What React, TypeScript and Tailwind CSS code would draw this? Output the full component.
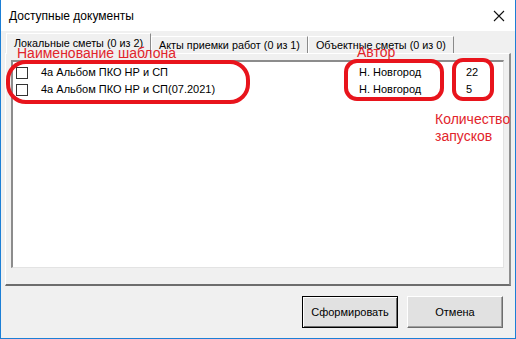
import React from 'react';

const rows = [
  { name: '4а Альбом ПКО НР и СП', author: 'Н. Новгород', runs: 22 },
  { name: '4а Альбом ПКО НР и СП(07.2021)', author: 'Н. Новгород', runs: 5 },
];

const tabs = ['Локальные сметы (0 из 2)', 'Акты приемки работ (0 из 1)', 'Объектные сметы (0 из 0)'];

const App: React.FC = () => {
  return (
    <div className="w-[516px] h-[339px] bg-[#f0f0f0] border border-[#1c7fd6] border-t-0 flex flex-col relative overflow-hidden text-black" style={{ fontFamily: '"Liberation Sans", "DejaVu Sans", sans-serif' }}>
      {/* Title bar */}
      <div className="h-[31px] bg-white flex items-center justify-between pl-[8px] pr-[10px] shrink-0">
        <span className="text-[12px]">Доступные документы</span>
        <svg width="12" height="12" viewBox="0 0 12 12">
          <path d="M1 1 L11 11 M11 1 L1 11" stroke="#111" strokeWidth="1.1" fill="none" />
        </svg>
      </div>

      {/* Tabs */}
      <div className="flex items-end pl-[5px] h-[21px] mt-[1px] shrink-0">
        {tabs.map((t, i) => (
          <div
            key={t}
            className={`border-t border-l border-r border-t-white border-l-white border-r-[#8a8a8a] px-[7px] text-[10.8px] whitespace-nowrap flex items-center ${
              i === 0 ? 'h-[21px] pb-[2px] bg-[#f0f0f0] relative z-10 mb-[-1px]' : 'h-[17px]'
            }`}
          >
            {t}
          </div>
        ))}
      </div>

      {/* Tab panel */}
      <div className="mx-[4px] h-[233px] border-t border-l border-t-white border-l-white border-r-2 border-b-2 border-r-[#8f8f8f] border-b-[#6d6d6d] px-[5px] pt-[6px] pb-[16px] shrink-0">
        <div className="h-full bg-white border-t-2 border-l-2 border-t-[#8c8c8c] border-l-[#8c8c8c] border-r border-b border-r-[#e3e3e3] border-b-[#e3e3e3] pt-[2px]">
          {rows.map((r) => (
            <div key={r.name} className="h-[17px] flex items-center text-[11px]">
              <div className="w-[12px] h-[12px] border border-[#333] bg-white ml-[3px] mr-[13px] shrink-0" />
              <span className="w-[318px] whitespace-nowrap">{r.name}</span>
              <span className="w-[107px] whitespace-nowrap">{r.author}</span>
              <span>{r.runs}</span>
            </div>
          ))}
        </div>
      </div>

      {/* Buttons */}
      <div className="flex justify-end gap-[9px] pr-[12px] pt-[10px]">
        <button className="w-[96px] h-[32px] bg-[#e1e1e1] border border-black shadow-[inset_1px_1px_0_#fff,inset_-1px_-1px_0_#6d6d6d] text-[11px]">
          Сформировать
        </button>
        <button className="w-[96px] h-[32px] bg-[#e1e1e1] border border-t-white border-l-white border-r-[#6d6d6d] border-b-[#6d6d6d] shadow-[inset_-1px_-1px_0_#a0a0a0] text-[11px]">
          Отмена
        </button>
      </div>

      {/* Annotations */}
      <span className="absolute z-20 left-[16px] top-[46px] text-[14px] text-[#e2242b] leading-none">Наименование шаблона</span>
      <span className="absolute z-20 left-[356px] top-[45px] text-[14px] text-[#e2242b] leading-none">Автор</span>
      <span className="absolute z-20 left-[434px] top-[111px] text-[14px] text-[#e2242b] leading-[17px]">
        Количество
        <br />
        запусков
      </span>
      <svg className="absolute z-20 left-0 top-0 pointer-events-none" width="516" height="339">
        <rect x="7" y="62" width="240" height="40" rx="18" fill="none" stroke="#e8141c" strokeWidth="4" />
        <rect x="345" y="61" width="96" height="38" rx="11" fill="none" stroke="#e8141c" strokeWidth="4" />
        <rect x="453" y="60" width="38" height="39" rx="9" fill="none" stroke="#e8141c" strokeWidth="4" />
      </svg>
    </div>
  );
};

export default App;
